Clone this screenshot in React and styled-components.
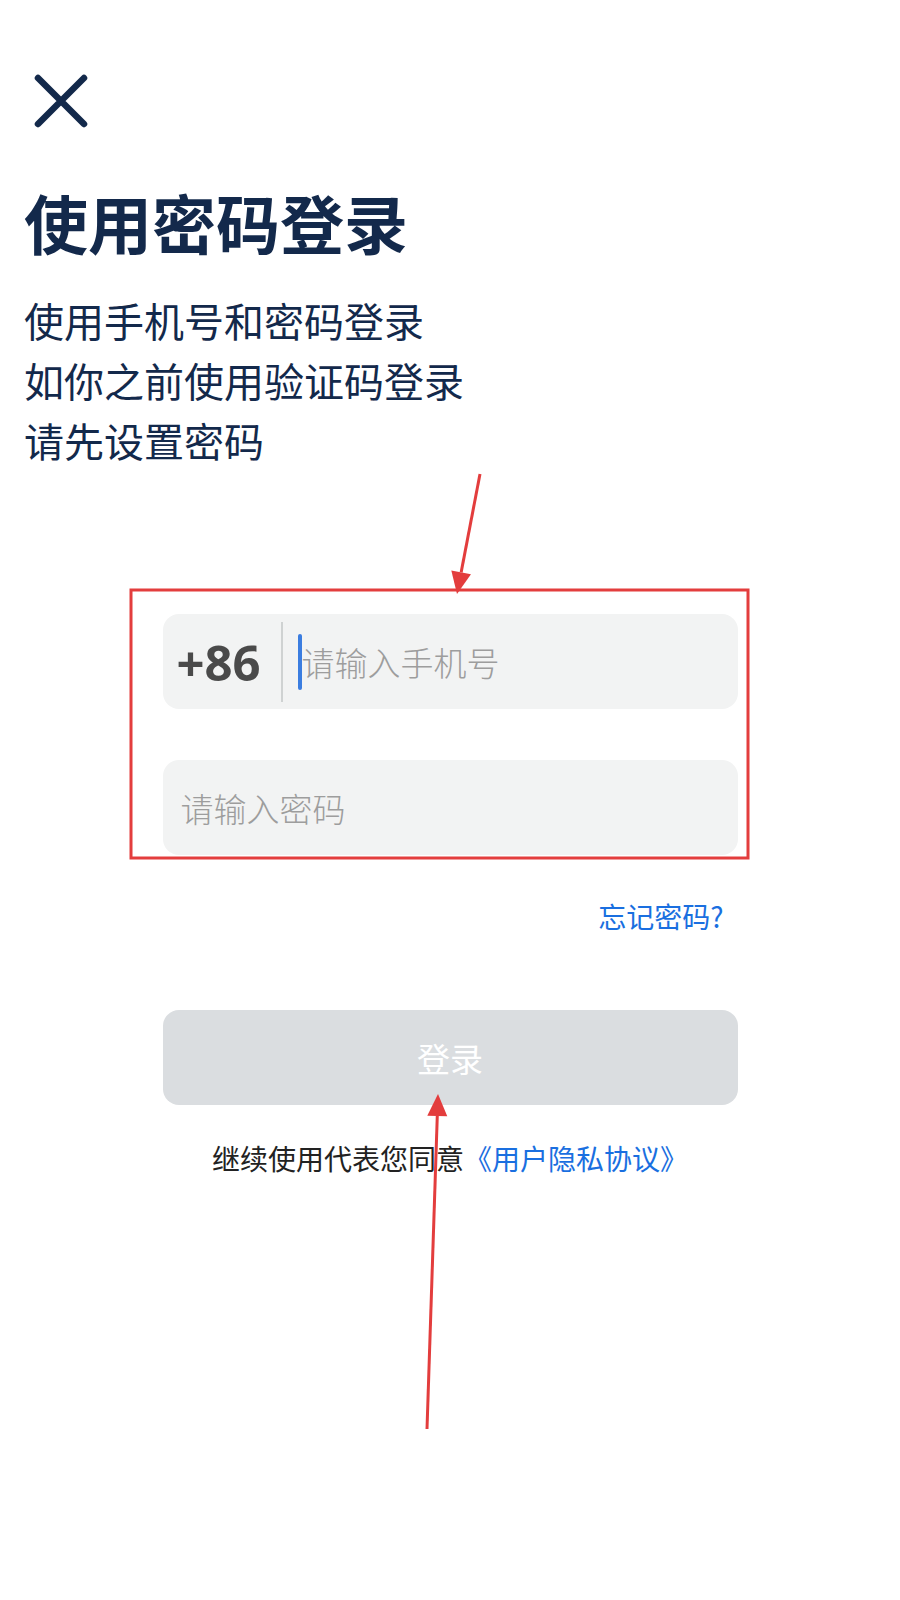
import React from "react";
import styled, { createGlobalStyle } from 'styled-components';


const GlobalStyle = createGlobalStyle`
    body {
        margin: 0;
        background: #ffffff;
        font-family: "Noto Sans", "Noto Sans CJK SC", sans-serif;
    }
`;

const Page = styled.div`
    position: relative;
    width: 900px;
    min-height: 1600px;
    box-sizing: border-box;
    padding: 73px 0 0 0;
    display: flex;
    flex-direction: column;
`;

const CloseButton = styled.button`
    margin-left: 33px;
    width: 56px;
    height: 56px;
    padding: 0;
    border: none;
    background: none;
    cursor: pointer;
    display: flex;
    align-items: center;
    justify-content: center;
`;

const Header = styled.div`
    padding-left: 24px;
    color: #13294b;
`;

const Title = styled.h1`
    margin: 56px 0 0 0;
    font-size: 64px;
    line-height: 72px;
    font-weight: 700;
    font-family: "Noto Sans CJK SC", sans-serif;
`;

const Intro = styled.p`
    margin: 33px 0 0 0;
    font-size: 40px;
    line-height: 60px;
    font-weight: 400;
    font-family: "Noto Sans CJK SC", sans-serif;
`;

const Form = styled.div`
    width: 575px;
    margin: 144px auto 0 auto;
    display: flex;
    flex-direction: column;
`;

const Field = styled.div`
    height: 95px;
    border-radius: 16px;
    background: #f2f3f3;
    display: flex;
    align-items: center;
    padding-left: ${props => props.inset}px;
    margin-top: ${props => props.gap || 0}px;
`;

const Prefix = styled.span`
    font-size: 49px;
    font-weight: 700;
    color: #4a4a4a;
    width: 88px;
    font-family: "Open Sans", "Noto Sans", sans-serif;
`;

const Divider = styled.span`
    width: 2px;
    height: 80px;
    background: #cfd2d2;
    margin-left: 16px;
`;

const Caret = styled.span`
    width: 4px;
    height: 56px;
    border-radius: 2px;
    background: #3b7de0;
    margin-left: 15px;
`;

const Placeholder = styled.span`
    font-size: 33px;
    font-weight: 300;
    color: #9d9d9d;
    font-family: "Noto Sans CJK SC", sans-serif;
`;

const ForgotLink = styled.a`
    align-self: flex-end;
    margin: 41px 14px 0 0;
    font-size: 28px;
    line-height: 40px;
    color: #1a6fe0;
    text-decoration: none;
    font-family: "Noto Sans CJK SC", sans-serif;
`;

const LoginButton = styled.button`
    margin-top: 74px;
    height: 95px;
    border: none;
    border-radius: 16px;
    background: #dadde0;
    color: #ffffff;
    font-size: 33px;
    font-family: "Noto Sans CJK SC", sans-serif;
`;

const Agreement = styled.p`
    margin: 33px 0 0 0;
    text-align: center;
    font-size: 28px;
    line-height: 40px;
    color: #222222;
    font-family: "Noto Sans CJK SC", sans-serif;
`;

const AgreementLink = styled.span`
    color: #1a6fe0;
`;

const Annotations = styled.svg`
    position: absolute;
    left: 0;
    top: 0;
    pointer-events: none;
`;


function CloseIcon() {
    return (
        <svg width="56" height="56" viewBox="0 0 56 56">
            <path d="M5 5 L51 51 M51 5 L5 51" stroke="#13294b" strokeWidth="6.5" strokeLinecap="round" />
        </svg>
    );
}

function Arrow({ x1, y1, x2, y2 }) {
    const angle = Math.atan2(y2 - y1, x2 - x1);
    const len = 22;
    const half = 10;
    const bx = x2 - Math.cos(angle) * len;
    const by = y2 - Math.sin(angle) * len;
    const px = -Math.sin(angle) * half;
    const py = Math.cos(angle) * half;

    return (
        <g>
            <line x1={x1} y1={y1} x2={bx} y2={by} stroke="#e33d3d" strokeWidth="3" />
            <polygon points={`${x2},${y2} ${bx + px},${by + py} ${bx - px},${by - py}`} fill="#e33d3d" />
        </g>
    );
}


export default function App() {
    return (
        <>
            <GlobalStyle />
            <Page>
                <CloseButton aria-label="关闭">
                    <CloseIcon />
                </CloseButton>

                <Header>
                    <Title>使用密码登录</Title>
                    <Intro>
                        使用手机号和密码登录<br />
                        如你之前使用验证码登录<br />
                        请先设置密码
                    </Intro>
                </Header>

                <Form>
                    <Field inset={14}>
                        <Prefix>+86</Prefix>
                        <Divider />
                        <Caret />
                        <Placeholder>请输入手机号</Placeholder>
                    </Field>

                    <Field inset={18} gap={51}>
                        <Placeholder>请输入密码</Placeholder>
                    </Field>

                    <ForgotLink href="#">忘记密码?</ForgotLink>

                    <LoginButton>登录</LoginButton>

                    <Agreement>
                        继续使用代表您同意<AgreementLink>《用户隐私协议》</AgreementLink>
                    </Agreement>
                </Form>

                <Annotations width="900" height="1600">
                    <rect x="131" y="590" width="617" height="268" fill="none" stroke="#e33d3d" strokeWidth="3" />
                    <Arrow x1={480} y1={474} x2={457} y2={594} />
                    <Arrow x1={427} y1={1429} x2={438} y2={1094} />
                </Annotations>
            </Page>
        </>
    );
}
